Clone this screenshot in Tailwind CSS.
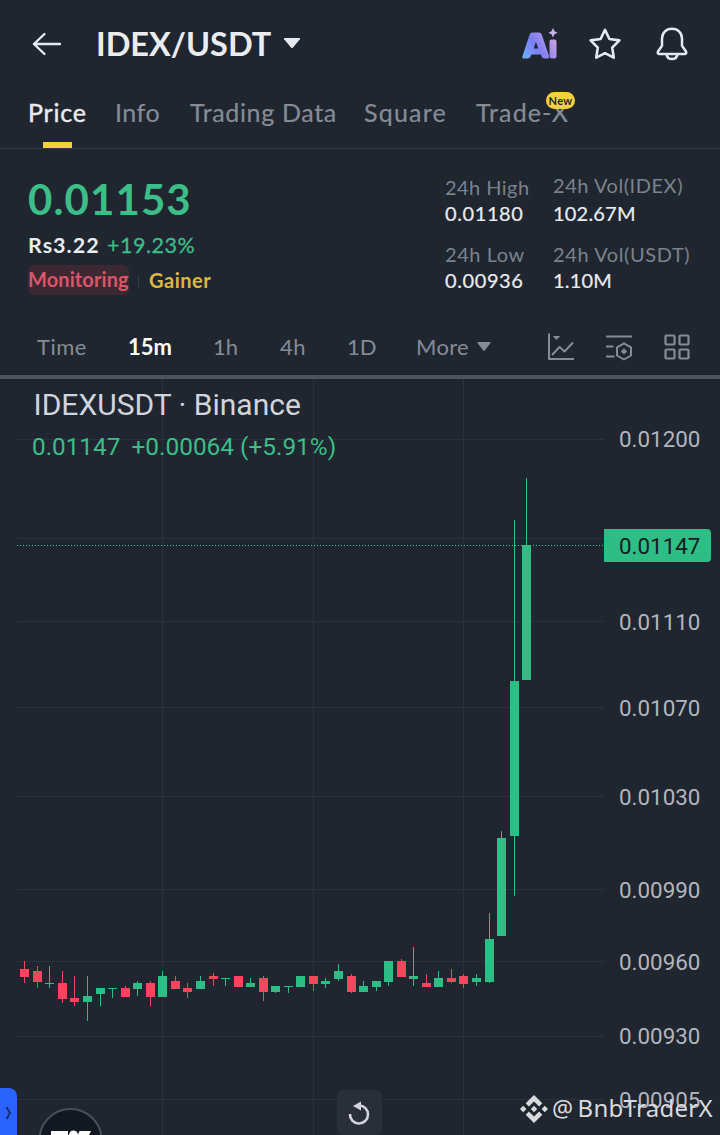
<!DOCTYPE html>
<html lang="en">
<head>
    <meta charset="UTF-8">
    <meta name="viewport" content="width=device-width, initial-scale=1.0">
    <title>IDEX/USDT</title>
    <script src="https://cdn.jsdelivr.net/npm/@tailwindcss/browser@4"></script>
</head>
<body class="bg-[#1f2630] text-[#eaecef] font-['Lato',sans-serif] w-[720px] h-[1135px] overflow-hidden flex flex-col">
    <!-- Title bar -->
    <header class="h-[88px] shrink-0 flex items-center pl-8 pr-[31px]">
        <svg class="w-[30px] h-6" viewBox="0 0 30 24" fill="none" stroke="#e6e9f0" stroke-width="2.4" stroke-linecap="round" stroke-linejoin="round">
            <path d="M28 12H2M12.5 2L2 12l10.5 10"/>
        </svg>
        <h1 class="ml-[34px] w-[176px] text-[32.5px] leading-10 font-bold whitespace-nowrap">IDEX/USDT</h1>
        <svg class="ml-[11px] -mt-0.5 w-[18px] h-3" viewBox="0 0 18 12" fill="#e6e9f0"><path d="M1.5 1h15q1 .3.4 1.2l-6.9 8.3q-1 1-2 0L1.1 2.2Q.5 1.3 1.5 1z"/></svg>
        <div class="ml-auto flex items-center">
            <svg class="w-[40px] h-9" viewBox="0 0 40 36">
                <defs>
                    <linearGradient id="ai" gradientUnits="userSpaceOnUse" x1="3" y1="32" x2="38" y2="12">
                        <stop offset="0" stop-color="#6cb2f7"/>
                        <stop offset="0.45" stop-color="#7c7df5"/>
                        <stop offset="1" stop-color="#d3a6e0"/>
                    </linearGradient>
                </defs>
                <g fill="url(#ai)">
                    <path fill-rule="evenodd" d="M13.500 6.500h6q2.500 0 3.200 1.900l7 20.500q1 3.600-2 3.600h-2.400q-2 0-2.700-2l-.7-2H12.500l-.9 2q-.8 2-2.800 2H5q-2.400 0-1.400-2.800l7-21q.6-2.200 2.900-2.200zM16.900 16l-2.200 6.500h4.600z"/>
                    <rect x="30.500" y="13.500" width="7" height="19" rx="2"/>
                </g>
                <path d="M34 2l1.500 3.200 3.200 1.500-3.200 1.500-1.500 3.300-1.500-3.300-3.200-1.500 3.200-1.500z" fill="#c9b4e6"/>
            </svg>
            <svg class="ml-[28px] w-[36px] h-[36px]" viewBox="0 0 36 36" fill="none" stroke="#e6e9f0" stroke-width="2.6" stroke-linejoin="round">
                <path d="M18 3.800l4.400 9.200 10 1.400-7.200 7.200 1.600 10.100L18 27.200l-8.800 4.500 1.600-10.100-7.200-7.200 10-1.400z"/>
            </svg>
            <svg class="ml-[32px] w-[34px] h-9" viewBox="0 0 34 36" fill="none" stroke="#e6e9f0" stroke-width="2.5" stroke-linejoin="round">
                <path d="M17 2.700c-6 0-10 4.200-10 10v7L3 25.500q-.9 2.400 1.500 2.500h25q2.400-.1 1.500-2.500L27 19.700v-7c0-5.800-4-10-10-10z"/>
                <path d="M11.500 28.300c1 6.400 10 6.400 11 0"/>
            </svg>
        </div>
    </header>

    <!-- Tabs -->
    <nav class="h-[61px] shrink-0 border-b border-[#343b47] flex pl-7 pt-[7px] text-[25px] leading-[34px] whitespace-nowrap text-[#868c96]">
        <div class="relative w-[87px] tracking-[0.8px] text-[#eaecef] [-webkit-text-stroke:0.4px]">Price
            <span class="absolute left-[15px] top-[47px] w-[29px] h-1.5 bg-[#f5d03c]"></span>
        </div>
        <div class="w-[75px] tracking-[0.5px] [-webkit-text-stroke:0.2px]">Info</div>
        <div class="w-[174px] tracking-[0.65px] [-webkit-text-stroke:0.2px]">Trading Data</div>
        <div class="w-[112px] tracking-[1.2px] [-webkit-text-stroke:0.2px]">Square</div>
        <div class="relative tracking-[1.1px] [-webkit-text-stroke:0.2px]">Trade-X
            <span class="absolute left-[70px] -top-[3px] w-[29px] h-[17px] rounded-full bg-[#f5d03c] text-[#1f2630] text-[11px] leading-[17px] font-bold text-center tracking-[0.3px] [-webkit-text-stroke:0]">New</span>
        </div>
    </nav>

    <!-- Ticker -->
    <section class="h-[169px] shrink-0 flex pl-7 whitespace-nowrap">
        <div class="w-[417px]">
            <div class="mt-[23px] h-[54px] text-[42px] leading-[54px] font-bold tracking-[1.1px] text-[#3dbd87]">0.01153</div>
            <div class="mt-[5px] h-[28px] text-[21.5px] leading-[28px] flex">
                <span class="w-[79px] font-bold tracking-[1px]">Rs3.22</span>
                <span class="tracking-[0.5px] text-[#3dbd87] [-webkit-text-stroke:0.3px]">+19.23%</span>
            </div>
            <div class="mt-[7px] flex items-center text-[20px] leading-[30px] font-bold">
                <span class="w-[101px] h-[30px] -mt-px rounded-md bg-[#3c2832] text-[#d9566a] leading-[29px] tracking-[0.1px]">Monitoring</span>
                <span class="ml-[9px] w-px h-3 bg-[#343b47]"></span>
                <span class="ml-[10px] -mt-0.5 tracking-[0.5px] text-[#dcb843]">Gainer</span>
            </div>
        </div>
        <div class="w-[108px] text-[20px] leading-[26px]">
            <div class="mt-[25px] tracking-[0.45px] text-[#7b828d]">24h High</div>
            <div class="tracking-[0.6px] [-webkit-text-stroke:0.2px]">0.01180</div>
            <div class="mt-[15px] tracking-[0.55px] text-[#7b828d]">24h Low</div>
            <div class="tracking-[0.6px] [-webkit-text-stroke:0.2px]">0.00936</div>
        </div>
        <div class="text-[20px] leading-[26px]">
            <div class="mt-[23px] tracking-[0.55px] text-[#7b828d]">24h Vol(IDEX)</div>
            <div class="mt-[2px] tracking-[0.2px] [-webkit-text-stroke:0.2px]">102.67M</div>
            <div class="mt-[15px] tracking-[0.6px] text-[#7b828d]">24h Vol(USDT)</div>
            <div class="tracking-[0.2px] [-webkit-text-stroke:0.2px]">1.10M</div>
        </div>
    </section>

    <!-- Interval bar -->
    <div class="h-[61px] shrink-0 border-b-4 border-[#4d535d] flex items-center pl-[37px] text-[22px] text-[#868c96] whitespace-nowrap">
        <span class="w-[91px] tracking-[0.5px]">Time</span>
        <span class="w-[85px] font-bold text-white">15m</span>
        <span class="w-[67px]">1h</span>
        <span class="w-[67px] tracking-[0.5px]">4h</span>
        <span class="w-[69px]">1D</span>
        <span class="w-[61px] tracking-[0.3px]">More</span>
        <svg class="w-[14px] h-[9px]" viewBox="0 0 14 9" fill="#868c96"><path d="M.8 0h12.400q.8.200.3 1L8 8.300q-1 1-2 0L.5 1Q0 .2.800 0z"/></svg>
        <svg class="ml-[56px] w-[28px] h-[28px]" viewBox="0 0 28 28" fill="none" stroke="#868c96" stroke-width="2" stroke-linejoin="round">
            <path d="M2 0.500V26h25M5 22l7.500-8 5 4.500 8.500-9"/>
            <path d="M5.800 3h7.400l-3.700 4z" fill="#868c96" stroke="none"/>
        </svg>
        <svg class="ml-[30px] w-[28px] h-[28px]" viewBox="0 0 28 28" fill="none" stroke="#868c96" stroke-width="2">
            <path d="M1 3.500h26M1 13.500h7.500M1 23.500h8.500"/>
            <path d="M19 10.300l7 4v8.200l-7 4-7-4v-8.200z" stroke-linejoin="round"/>
            <path d="M19 15.200l3.200 3.200-3.200 3.200-3.200-3.200z" fill="#868c96" stroke="none"/>
        </svg>
        <svg class="ml-[31px] w-[26px] h-[26px]" viewBox="0 0 26 26" fill="none" stroke="#868c96" stroke-width="2.2">
            <rect x="1.500" y="1.500" width="9" height="9" rx="1"/><rect x="15.500" y="1.500" width="9" height="9" rx="1"/>
            <rect x="1.500" y="15.500" width="9" height="9" rx="1"/><rect x="15.500" y="15.500" width="9" height="9" rx="1"/>
        </svg>
    </div>

    <!-- Chart -->
    <main class="relative h-[756px] shrink-0">
        <svg id="chart" class="block w-[720px] h-[756px] font-['Roboto',sans-serif]" viewBox="0 379 720 756">
            <g id="grid" fill="#2a313b"></g>
            <g id="axis" fill="#b2b5be" font-size="22.4"></g>
            <g id="candles"></g>
            <path d="M17 545.500H604" stroke="#48c795" stroke-dasharray="1 2"/>
            <path d="M604 529h103q4 0 4 4v25q0 4-4 4H604z" fill="#2ebd85"/>
            <text x="619" y="554" font-size="22.4" fill="#14201f">0.01147</text>
            <text x="33.500" y="415" font-size="30" fill="#d1d4dc">IDEXUSDT · Binance</text>
            <text x="32" y="455" font-size="24.3" fill="#3dbd87">0.01147</text>
            <text x="131.500" y="455" font-size="24.4" fill="#3dbd87">+0.00064 (+5.91%)</text>

            <!-- side panel handle -->
            <rect x="-10" y="1088" width="27" height="70" rx="8" fill="#2962ff"/>
            <path d="M6.500 1107l3.500 6-3.500 6" fill="none" stroke="#17306f" stroke-width="2"/>

            <!-- chart provider badge -->
            <circle cx="70.500" cy="1140" r="31" fill="#131722" stroke="#4a4e59" stroke-width="2"/>
            <path d="M51 1131h17v10H51zM79.500 1131h11.500l-5 10H75.500z" fill="#fff"/>
            <circle cx="73.500" cy="1135" r="4.500" fill="#fff"/>

            <!-- reset button -->
            <rect x="337" y="1090" width="45" height="45" rx="6" fill="#292e39"/>
            <path d="M350 1114a9 9 0 1 0 9-8.500" fill="none" stroke="#d1d4dc" stroke-width="2.6"/>
            <path d="M353 1106l8-4.500v9z" fill="#d1d4dc"/>

            <!-- author mark -->
            <g fill="#d9dadd">
                <path d="M534 1095l8.300 8.300-3.200 3.200-5.100-5.100-5.100 5.100-3.200-3.200zM534 1123l8.300-8.300-3.200-3.200-5.100 5.100-5.100-5.100-3.200 3.200zM534 1105.800l3.200 3.200-3.200 3.200-3.200-3.200zM523.200 1105.800l3.200 3.200-3.200 3.200-3.200-3.200zM544.800 1105.800l3.200 3.200-3.200 3.200-3.200-3.200z"/>
                <text x="552" y="1116.500" font-size="23.5" font-family="Noto Sans">@</text>
                <text x="577.500" y="1117" font-size="24" font-family="Noto Sans" textLength="135">BnbTraderX</text>
            </g>
        </svg>
    </main>

    <script>
        const UP = '#2ebd85';
        const DOWN = '#f6465d';

        // left, wick top, body top, body bottom, wick bottom, colour
        const candles = [
            [20, 961, 969, 977, 983, DOWN],
            [33, 966, 971, 982, 988, DOWN],
            [45, 966, 983, 984, 988, UP],
            [58, 971, 983, 999, 1003, DOWN],
            [70, 976, 998, 1002, 1006, DOWN],
            [83, 976, 996, 1002, 1021, UP],
            [96, 988, 988, 994, 1006, UP],
            [108, 988, 988, 989, 998, UP],
            [121, 986, 988, 997, 997, DOWN],
            [133, 981, 983, 989, 996, UP],
            [146, 981, 983, 997, 1006, DOWN],
            [158, 971, 976, 997, 997, UP],
            [171, 976, 981, 989, 989, DOWN],
            [183, 983, 988, 992, 998, DOWN],
            [196, 976, 981, 989, 989, UP],
            [209, 973, 976, 979, 986, DOWN],
            [221, 978, 978, 979, 986, UP],
            [234, 976, 976, 987, 987, DOWN],
            [246, 978, 983, 987, 987, UP],
            [259, 976, 978, 992, 1001, DOWN],
            [271, 986, 986, 992, 993, UP],
            [284, 986, 986, 987, 993, UP],
            [296, 976, 976, 987, 987, UP],
            [309, 976, 976, 984, 991, DOWN],
            [321, 978, 981, 984, 988, UP],
            [334, 964, 971, 979, 981, UP],
            [347, 974, 976, 992, 993, DOWN],
            [359, 981, 986, 992, 992, UP],
            [372, 981, 981, 987, 991, UP],
            [384, 961, 961, 982, 986, UP],
            [397, 959, 961, 977, 977, DOWN],
            [409, 947, 976, 979, 986, UP],
            [422, 974, 983, 987, 987, DOWN],
            [434, 971, 978, 987, 987, UP],
            [447, 969, 978, 982, 983, DOWN],
            [459, 974, 976, 984, 988, DOWN],
            [472, 974, 978, 982, 986, UP],
            [485, 913, 939, 982, 983, UP],
            [497, 831, 838, 936, 936, UP],
            [510, 520, 681, 836, 896, UP],
            [522, 478, 545, 680, 680, UP],
        ];

        // grid line, label baseline, label
        const levels = [
            [439, 447, '0.01200'], [538, 0, ''], [621, 630, '0.01110'], [707, 716, '0.01070'], [796, 805, '0.01030'],
            [889, 898, '0.00990'], [961, 970, '0.00960'], [1036, 1044, '0.00930'], [1099, 1108, '0.00905'],
        ];

        const rect = (x, y, w, h, fill) => `<rect x="${x}" y="${y}" width="${w}" height="${h}"${fill ? ` fill="${fill}"` : ''}/>`;

        document.getElementById('grid').innerHTML =
            levels.map(([y]) => rect(17, y, 588, 1)).join('') +
            [162, 313, 463].map(x => rect(x, 379, 1, 756)).join('');

        document.getElementById('axis').innerHTML = levels
            .filter(([, , label]) => label)
            .map(([, y, label]) => `<text x="619" y="${y}">${label}</text>`)
            .join('');

        document.getElementById('candles').innerHTML = candles
            .map(([x, high, top, bottom, low, color]) => rect(x + 4, high, 1, low - high, color) + rect(x, top, 9, bottom - top, color))
            .join('');
    </script>
</body>
</html>
